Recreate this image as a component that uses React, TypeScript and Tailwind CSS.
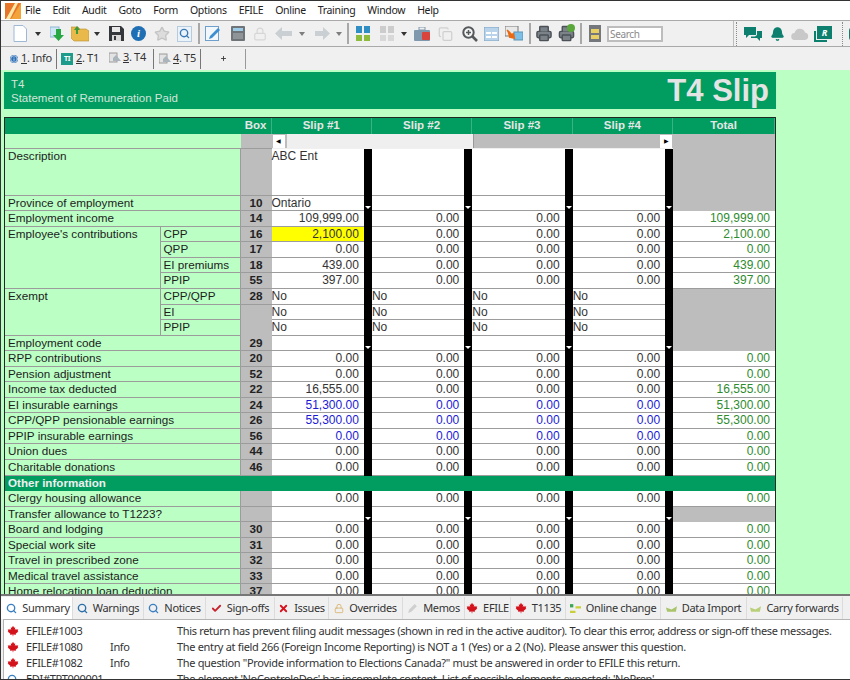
import React from 'react';
import { Bell, Copy, Info, Lock, Printer, Search, Star, X, Check, Plus } from 'lucide-react';

const uiFont = "font-['Noto_Sans',sans-serif] tracking-[-0.33px]";
const gridFont = "font-['Liberation_Sans',Arial,sans-serif]";

const Leaf = ({ className }: { className: string }) => (
  <svg viewBox="0 0 16 16" className={className}>
    <path
      fill="#d3121c"
      d="M8 1 L9.5 3.8 L11 3 L10.4 6.6 L12.2 4.9 L12.7 6.2 L15 5.8 L14.2 8.2 L15.2 8.8 L11.6 11.8 L12 13 L8.4 12.5 L8.4 15 L7.6 15 L7.6 12.5 L4 13 L4.4 11.8 L0.8 8.8 L1.8 8.2 L1 5.8 L3.3 6.2 L3.8 4.9 L5.6 6.6 L5 3 L6.5 3.8 Z"
    />
  </svg>
);

const Caret = ({ className }: { className: string }) => (
  <svg viewBox="0 0 6 4" className={`w-[6px] h-[4px] shrink-0 ${className}`}>
    <path d="M0 0h6L3 4z" fill="#333" />
  </svg>
);

const Sep = ({ className }: { className: string }) => (
  <div className={`w-[2px] h-[21px] shrink-0 bg-[#a8a8a8] ${className}`} />
);

const Dots = ({ className }: { className: string }) => (
  <div className={`w-[1px] h-[24px] shrink-0 border-l border-dotted border-[#8a8a8a] ${className}`} />
);

function Toolbar() {
  return (
    <div className="h-[27px] flex items-center bg-[#f0f0f0] border-y border-[#a9a9a9] overflow-hidden">
      <svg viewBox="0 0 14 17" className="ml-[12px] w-[14px] h-[17px] shrink-0">
        <path d="M1 .5h9l3.5 3.5v12.5H1z" fill="#fff" stroke="#9db9d6" />
      </svg>
      <Caret className="ml-[8px]" />
      <svg viewBox="0 0 14 15" className="ml-[9px] w-[14px] h-[15px] shrink-0">
        <rect x="0" y="1" width="9" height="10" fill="#cfe6f5" stroke="#8db5d3" />
        <path d="M6 3h5v6h3l-5.5 6L3 9h3z" fill="#28a745" />
      </svg>
      <svg viewBox="0 0 18 17" className="ml-[7px] w-[18px] h-[17px] shrink-0">
        <path d="M0 2h7l2 2h6l3 2v10H3L0 13z" fill="#e9b94a" stroke="#b98d2c" strokeWidth=".6" />
        <path d="M6 1l3 4H7v4H5V5H3z" fill="#3c9a3c" />
      </svg>
      <Caret className="ml-[5px]" />
      <svg viewBox="0 0 15 15" className="ml-[9px] w-[15px] h-[15px] shrink-0">
        <path d="M0 0h12l3 3v12H0z" fill="#33373b" />
        <rect x="3" y="1" width="8" height="5" fill="#e8e8e8" />
        <rect x="3" y="9" width="9" height="6" fill="#d8d8d8" />
        <rect x="5" y="10" width="2" height="4" fill="#33373b" />
      </svg>
      <div className="ml-[7px] w-[15px] h-[15px] shrink-0 rounded-full bg-[#1f6fb5] flex items-center justify-center">
        <span className="text-white text-[11px] leading-none font-bold italic font-['Liberation_Serif',serif]">i</span>
      </div>
      <Star className="ml-[8px] w-[16px] h-[16px] shrink-0 text-[#c4c4c4]" fill="#dcdcdc" />
      <div className="ml-[7px] w-[15px] h-[16px] shrink-0 bg-[#eaf2fa] border border-[#b7cbdf] flex items-center justify-center">
        <Search className="w-[11px] h-[11px] text-[#3a78b5]" strokeWidth={3} />
      </div>
      <Sep className="ml-[6px]" />
      <svg viewBox="0 0 15 15" className="ml-[5px] w-[15px] h-[15px] shrink-0">
        <rect x=".5" y=".5" width="13" height="14" fill="#f2f7fc" stroke="#6fa0cc" />
        <path d="M5 10l8-8 2 2-8 8-3 1z" fill="#3d8fd1" />
      </svg>
      <svg viewBox="0 0 14 15" className="ml-[11px] w-[14px] h-[15px] shrink-0">
        <rect width="14" height="15" rx="1" fill="#6f7479" />
        <rect x="2" y="2" width="10" height="3" fill="#9ccbe8" />
        <rect x="2" y="7" width="10" height="6" fill="#8f9499" />
      </svg>
      <Lock className="ml-[8px] w-[14px] h-[16px] shrink-0 text-[#d6d6d6]" />
      <svg viewBox="0 0 17 13" className="ml-[8px] w-[17px] h-[13px] shrink-0">
        <path d="M0 6.5L7 0v4h10v5H7v4z" fill="#c9cfd2" />
      </svg>
      <Caret className="ml-[7px] opacity-60" />
      <svg viewBox="0 0 15 13" className="ml-[10px] w-[15px] h-[13px] shrink-0">
        <path d="M15 6.5L8 0v4H0v5h8v4z" fill="#c9cfd2" />
      </svg>
      <Caret className="ml-[6px] opacity-60" />
      <Sep className="ml-[5px]" />
      <div className="ml-[7px] w-[14px] h-[15px] shrink-0 grid grid-cols-2 gap-[2px]">
        <div className="bg-[#2f8fc4]" />
        <div className="bg-[#2f8fc4]" />
        <div className="bg-[#8dbb3c]" />
        <div className="bg-[#8dbb3c]" />
      </div>
      <div className="ml-[10px] w-[14px] h-[15px] shrink-0 grid grid-cols-2 gap-[2px] opacity-70">
        <div className="bg-[#bdbdbd]" />
        <div className="bg-[#bdbdbd]" />
        <div className="bg-[#cfcfcf]" />
        <div className="bg-[#cfcfcf]" />
      </div>
      <Caret className="ml-[7px]" />
      <svg viewBox="0 0 16 14" className="ml-[7px] w-[16px] h-[14px] shrink-0">
        <rect y="3" width="16" height="11" rx="1" fill="#7f98ad" />
        <rect x="8" y="5" width="8" height="8" rx="1" fill="#d9453d" />
        <rect x="5" y="0" width="6" height="3" fill="none" stroke="#7f98ad" />
      </svg>
      <Copy className="ml-[8px] w-[15px] h-[16px] shrink-0 text-[#cfcfcf]" />
      <svg viewBox="0 0 16 16" className="ml-[9px] w-[16px] h-[16px] shrink-0">
        <circle cx="6.5" cy="6.5" r="5.2" fill="#f5f5f5" stroke="#55595c" strokeWidth="2" />
        <path d="M10.5 10.5L15 15" stroke="#55595c" strokeWidth="2.6" />
        <path d="M6.5 4v5M4 6.5h5" stroke="#55595c" strokeWidth="1.5" />
      </svg>
      <svg viewBox="0 0 15 14" className="ml-[6px] w-[15px] h-[14px] shrink-0">
        <rect width="15" height="14" fill="#b9d3ea" stroke="#7da2c4" />
        <path d="M2 5h5v2H2zM8 5h5v2H8zM2 9h5v2H2zM8 9h5v2H8z" fill="#fff" />
      </svg>
      <svg viewBox="0 0 18 16" className="ml-[6px] w-[18px] h-[16px] shrink-0">
        <rect x="0" y="0" width="13" height="10" fill="#e9e9e9" stroke="#777" />
        <rect x="9" y="6" width="9" height="8" fill="#7cc0e8" stroke="#5d93b5" />
        <path d="M2 4l7 7-1-4 1 5-5-1" fill="#ea6a12" stroke="#ea6a12" strokeWidth="1.6" />
      </svg>
      <Sep className="ml-[6px]" />
      <Printer className="ml-[4px] w-[18px] h-[17px] shrink-0 text-[#4b5157]" fill="#7b8288" />
      <div className="ml-[5px] relative w-[17px] h-[17px] shrink-0">
        <Printer className="w-[17px] h-[17px] text-[#4b5157]" fill="#7b8288" />
        <span className="absolute -top-[1px] right-0 w-[8px] h-[8px] rounded-full bg-[#5aa83a]" />
      </div>
      <Sep className="ml-[5px]" />
      <div className="ml-[7px] w-[12px] h-[17px] shrink-0 bg-[#74787c] flex flex-col items-center justify-center gap-[2px]">
        <div className="w-[8px] h-[4px] bg-[#e8cf63]" />
        <div className="w-[8px] h-[4px] bg-[#e8cf63]" />
      </div>
      <div className={`ml-[6px] w-[56px] h-[16px] shrink-0 bg-white border-2 border-[#bdbdbd] text-[10px] leading-[12px] px-[1px] text-[#8a8a8a] ${uiFont}`}>
        Search
      </div>
      <div className="ml-[70px] w-[1px] h-[26px] shrink-0 bg-[#bdbdbd]" />
      <Dots className="ml-[2px]" />
      <svg viewBox="0 0 18 14" className="ml-[7px] w-[18px] h-[14px] shrink-0">
        <path d="M0 0h12v8H5l-3 3V8H0z" fill="#0c7f6e" />
        <path d="M7 9.5h4l2-1.5V4h5v7h-2v3l-3-3H7z" fill="#0c7f6e" />
      </svg>
      <Bell className="ml-[8px] w-[15px] h-[16px] shrink-0 text-[#0c7f6e]" fill="#0c7f6e" />
      <svg viewBox="0 0 18 14" className="ml-[6px] w-[18px] h-[14px] shrink-0">
        <path d="M4 13a3.5 3.5 0 0 1-.5-7A5.5 5.5 0 0 1 14 5.5a3.8 3.8 0 0 1 0 7.5z" fill="#c8c8c8" />
      </svg>
      <div className="ml-[5px] relative w-[18px] h-[16px] shrink-0">
        <div className="absolute left-0 bottom-0 w-[13px] h-[11px] border-l-2 border-b-2 border-[#0c7f6e]" />
        <div className="absolute right-0 top-0 w-[15px] h-[13px] bg-[#0c7f6e] flex items-center justify-center text-white text-[9px] font-bold italic leading-none">
          R
        </div>
      </div>
      <Dots className="ml-[10px]" />
      <div className="ml-[6px] w-[6px] h-[14px] shrink-0 rounded-l-sm bg-[#0c7f6e]" />
    </div>
  );
}

const DocGlyph = () => (
  <svg viewBox="0 0 12 11" className="w-[12px] h-[11px] shrink-0">
    <rect x="0" y="1" width="8" height="9" fill="#e3e3e3" stroke="#9a9a9a" />
    <path d="M4 6l3-3 5 6H4z" fill="#a9b4bb" />
  </svg>
);

function SlipTabBar() {
  return (
    <div className={`h-[23px] flex items-center bg-[#f0f0f0] text-[11px] text-[#333] ${uiFont}`}>
      <div className="w-[55px] pl-[9px] flex items-center gap-[3px] shrink-0">
        <Info className="w-[8px] h-[8px] text-white bg-[#2f6fb5] rounded-full" />
        <span>
          <u>1</u>. Info
        </span>
      </div>
      <div className="w-[1px] h-[20px] bg-[#777] shrink-0" />
      <div className="w-[52px] pl-[4px] flex items-center gap-[3px] shrink-0">
        <span className="w-[12px] h-[12px] bg-[#1d9c8c] text-white text-[7px] font-bold leading-[12px] text-center">TI</span>
        <span>
          <u>2</u>. T1
        </span>
      </div>
      <div className="w-[44px] flex items-center gap-[2px] shrink-0 -mt-[3px]">
        <DocGlyph />
        <span>
          <u>3</u>. T4
        </span>
      </div>
      <div className="w-[1px] h-[20px] bg-[#777] shrink-0" />
      <div className="w-[46px] pl-[5px] flex items-center gap-[2px] shrink-0">
        <DocGlyph />
        <span>
          <u>4</u>. T5
        </span>
      </div>
      <div className="w-[1px] h-[20px] bg-[#777] shrink-0" />
      <div className="w-[44px] flex justify-center items-center shrink-0">
        <Plus className="w-[7px] h-[7px] text-[#333]" strokeWidth={3} />
      </div>
      <div className="w-[1px] h-[20px] bg-[#999] shrink-0" />
    </div>
  );
}

const lineB = 'border-b border-[#9c9c9c]';
const labelCell = `bg-[#bbffc4] border-r border-[#9c9c9c] ${lineB} pl-[3px] text-[#1c1c1c] text-[11.7px] whitespace-nowrap leading-[14px]`;
const boxCell = `bg-[#bdbdbd] ${lineB} text-center font-bold text-[#222] text-[11.7px] leading-[14px]`;
const greyCell = 'bg-[#bdbdbd]';
const totalCell = `bg-white ${lineB} text-right pr-[5px] leading-[14px] text-[#2e8b2e]`;

function SlipCell({
  value,
  color = 'text-[#333]',
  left = false,
  dropdown = false,
  bg = 'bg-white',
}: {
  value: string;
  color?: string;
  left?: boolean;
  dropdown?: boolean;
  bg?: string;
}) {
  return (
    <div className="flex min-w-0">
      <div className={`flex-1 min-w-0 ${bg} ${lineB} leading-[14px] whitespace-nowrap ${color} ${left ? 'text-left' : 'text-right pr-[5px]'}`}>
        {value}
      </div>
      <div className="w-[8px] shrink-0 bg-black flex items-end justify-center pb-[2px]">
        {dropdown && (
          <svg viewBox="0 0 6 3" className="w-[6px] h-[3px]">
            <path d="M0 0h6L3 3z" fill="#fff" />
          </svg>
        )}
      </div>
    </div>
  );
}

function NumCells({ first, color }: { first: string; color?: string }) {
  const zero = '0.00';
  return (
    <>
      <SlipCell value={first} color={color} />
      <SlipCell value={zero} color={color} />
      <SlipCell value={zero} color={color} />
      <SlipCell value={zero} color={color} />
      <div className={totalCell}>{first}</div>
    </>
  );
}

const DropCells = ({ first = '' }: { first?: string }) => (
  <>
    <SlipCell value={first} left dropdown />
    <SlipCell value="" left dropdown />
    <SlipCell value="" left dropdown />
    <SlipCell value="" left dropdown />
  </>
);

const simpleRows = [
  { label: 'RPP contributions', box: '20', first: '0.00' },
  { label: 'Pension adjustment', box: '52', first: '0.00' },
  { label: 'Income tax deducted', box: '22', first: '16,555.00' },
  { label: 'EI insurable earnings', box: '24', first: '51,300.00', blue: true },
  { label: 'CPP/QPP pensionable earnings', box: '26', first: '55,300.00', blue: true },
  { label: 'PPIP insurable earnings', box: '56', first: '0.00', blue: true },
  { label: 'Union dues', box: '44', first: '0.00' },
  { label: 'Charitable donations', box: '46', first: '0.00' },
];

const lowerRows = [
  { label: 'Board and lodging', box: '30' },
  { label: 'Special work site', box: '31' },
  { label: 'Travel in prescribed zone', box: '32' },
  { label: 'Medical travel assistance', box: '33' },
  { label: 'Home relocation loan deduction', box: '37' },
];

const contributions = [
  { label: 'CPP', box: '16', first: '2,100.00' },
  { label: 'QPP', box: '17', first: '0.00' },
  { label: 'EI premiums', box: '18', first: '439.00' },
  { label: 'PPIP', box: '55', first: '397.00' },
];

function SlipGrid() {
  return (
    <div className={`ml-[3px] w-[772px] mt-[8px] border-[1.5px] border-[#1d2b22] text-[12px] text-[#333] grid grid-cols-[155.5px_80px_31px_100.4px_100.4px_100.4px_100.4px_1fr] auto-rows-[15.55px] ${gridFont}`}>
      {/* heading */}
      <div className="col-span-2 bg-[#009c60]" />
      <div className="bg-[#009c60] text-[#e6e6e6] text-[11.5px] font-bold text-center leading-[15px] border-r border-[#3bb283]">Box</div>
      {['Slip #1', 'Slip #2', 'Slip #3', 'Slip #4', 'Total'].map((h) => (
        <div key={h} className="bg-[#009c60] text-[#e6e6e6] text-[11.5px] font-bold text-center leading-[15px] border-r border-[#3bb283] last:border-r-0">
          {h}
        </div>
      ))}

      {/* scrollbar */}
      <div className={`col-span-2 bg-[#bbffc4] ${lineB}`} />
      <div className={boxCell} />
      <div className="col-span-4 bg-[#bdbdbd] border-b border-[#f0f0f0] flex">
        <div className="ml-[1px] w-[12px] h-[13px] mt-[1px] bg-white flex items-center justify-center text-[6px] leading-none text-black">◀</div>
        <div className="ml-[2px] w-[187px] h-[14px] bg-[#efefef] border-r border-[#999]" />
        <div className="ml-auto mr-[1px] w-[12px] h-[13px] mt-[1px] bg-white flex items-center justify-center text-[6px] leading-none text-black">▶</div>
      </div>
      <div className={greyCell} />

      {/* description and province */}
      <div className={`col-span-2 row-span-3 ${labelCell}`}>Description</div>
      <div className={`row-span-3 ${boxCell}`} />
      <div className="row-span-3 flex min-w-0">
        <div className={`flex-1 bg-white ${lineB} leading-[14px]`}>ABC Ent</div>
        <div className="w-[8px] bg-black" />
      </div>
      {[2, 3, 4].map((n) => (
        <div key={n} className="row-span-3 flex min-w-0">
          <div className={`flex-1 bg-white ${lineB}`} />
          <div className="w-[8px] bg-black" />
        </div>
      ))}
      <div className={`row-span-4 ${greyCell}`} />

      <div className={`col-span-2 ${labelCell}`}>Province of employment</div>
      <div className={boxCell}>10</div>
      <DropCells first="Ontario" />

      <div className={`col-span-2 ${labelCell}`}>Employment income</div>
      <div className={boxCell}>14</div>
      <NumCells first="109,999.00" />

      {/* contributions */}
      <div className={`row-span-4 ${labelCell}`}>Employee's contributions</div>
      {contributions.map((c) => (
        <React.Fragment key={c.box}>
          <div className={labelCell}>{c.label}</div>
          <div className={boxCell}>{c.box}</div>
          {c.box === '16' ? (
            <>
              <SlipCell value={c.first} bg="bg-[#ffff00]" />
              <SlipCell value="0.00" />
              <SlipCell value="0.00" />
              <SlipCell value="0.00" />
              <div className={totalCell}>{c.first}</div>
            </>
          ) : (
            <NumCells first={c.first} />
          )}
        </React.Fragment>
      ))}

      {/* exempt */}
      <div className={`row-span-3 ${labelCell}`}>Exempt</div>
      {['CPP/QPP', 'EI', 'PPIP'].map((l, i) => (
        <React.Fragment key={l}>
          <div className={labelCell}>{l}</div>
          <div className={i === 0 ? boxCell : `${boxCell} border-[#bdbdbd]`}>{i === 0 ? '28' : ''}</div>
          <SlipCell value="No" left />
          <SlipCell value="No" left />
          <SlipCell value="No" left />
          <SlipCell value="No" left />
          {i === 0 && <div className={`row-span-4 ${greyCell}`} />}
        </React.Fragment>
      ))}

      <div className={`col-span-2 ${labelCell}`}>Employment code</div>
      <div className={boxCell}>29</div>
      <DropCells />

      {simpleRows.map((r) => (
        <React.Fragment key={r.box}>
          <div className={`col-span-2 ${labelCell}`}>{r.label}</div>
          <div className={boxCell}>{r.box}</div>
          <NumCells first={r.first} color={r.blue ? 'text-[#1a1ad6]' : undefined} />
        </React.Fragment>
      ))}

      {/* other information */}
      <div className="col-span-8 bg-[#009c60] text-[#f0f0f0] text-[11.6px] font-bold pl-[3px] leading-[14px]">Other information</div>

      <div className={`col-span-2 ${labelCell}`}>Clergy housing allowance</div>
      <div className={boxCell} />
      <NumCells first="0.00" />

      <div className={`col-span-2 ${labelCell}`}>Transfer allowance to T1223?</div>
      <div className={boxCell} />
      <DropCells />
      <div className={greyCell} />

      {lowerRows.map((r) => (
        <React.Fragment key={r.box}>
          <div className={`col-span-2 ${labelCell}`}>{r.label}</div>
          <div className={boxCell}>{r.box}</div>
          <NumCells first="0.00" />
        </React.Fragment>
      ))}
    </div>
  );
}

const MagGlyph = ({ color }: { color: string }) => (
  <Search className={`w-[11px] h-[11px] shrink-0 ${color}`} strokeWidth={3} />
);

const auditTabs: { label: string; w: string; icon: React.ReactNode; active?: boolean }[] = [
  { label: 'Summary', w: 'w-[72px] pl-[3px]', icon: <MagGlyph color="text-[#3a7fc0]" />, active: true },
  { label: 'Warnings', w: 'w-[71px]', icon: <MagGlyph color="text-[#2a6fa8]" /> },
  { label: 'Notices', w: 'w-[62px]', icon: <MagGlyph color="text-[#3a7fc0]" /> },
  { label: 'Sign-offs', w: 'w-[69px]', icon: <Check className="w-[11px] h-[11px] shrink-0 text-[#c8232c]" strokeWidth={4} /> },
  { label: 'Issues', w: 'w-[54px]', icon: <X className="w-[11px] h-[11px] shrink-0 text-[#d9121f]" strokeWidth={4} /> },
  { label: 'Overrides', w: 'w-[74px]', icon: <Lock className="w-[10px] h-[11px] shrink-0 text-[#d9b26a]" /> },
  { label: 'Memos', w: 'w-[62px]', icon: <svg viewBox="0 0 10 10" className="w-[11px] h-[11px] shrink-0"><path d="M1 9l1-3 5-5 2 2-5 5z" fill="#cfcfcf" /></svg> },
  { label: 'EFILE', w: 'w-[46px]', icon: <Leaf className="w-[12px] h-[12px] shrink-0" /> },
  { label: 'T1135', w: 'w-[55px]', icon: <Leaf className="w-[12px] h-[12px] shrink-0" /> },
  { label: 'Online change', w: 'w-[95px]', icon: <svg viewBox="0 0 10 10" className="w-[11px] h-[11px] shrink-0"><path d="M0 1h3v3H0z" fill="#3aa655" /><path d="M5 3h5v2H5zM0 7h5v2H0z" fill="#c9cf3a" /></svg> },
  { label: 'Data Import', w: 'w-[86px]', icon: <svg viewBox="0 0 10 10" className="w-[11px] h-[11px] shrink-0"><path d="M0 4l5 2 5-3-1 5H1z" fill="#a9c46a" /></svg> },
  { label: 'Carry forwards', w: 'w-[96px]', icon: <svg viewBox="0 0 10 10" className="w-[11px] h-[11px] shrink-0"><path d="M0 4l5 2 5-3-1 5H1z" fill="#b9cf7a" /></svg> },
];

const messages = [
  {
    id: 'EFILE#1003',
    kind: '',
    text: 'This return has prevent filing audit messages (shown in red in the active auditor). To clear this error, address or sign-off these messages.',
  },
  {
    id: 'EFILE#1080',
    kind: 'Info',
    text: 'The entry at field 266 (Foreign Income Reporting) is NOT a 1 (Yes) or a 2 (No). Please answer this question.',
  },
  {
    id: 'EFILE#1082',
    kind: 'Info',
    text: 'The question "Provide information to Elections Canada?" must be answered in order to EFILE this return.',
  },
  {
    id: 'EDI#TPT000001',
    kind: '',
    text: "The element 'NoControleDoc' has incomplete content. List of possible elements expected: 'NoPrep'.",
  },
];

function AuditPane() {
  return (
    <div className={`h-[85px] shrink-0 bg-[#f0f0f0] border-t-[2px] border-[#777] flex flex-col text-[11px] text-[#333] overflow-hidden ${uiFont}`}>
      <div className="h-[22px] mt-[1px] flex items-stretch shrink-0">
        {auditTabs.map((t) => (
          <div
            key={t.label}
            className={`${t.w} shrink-0 flex items-center justify-center gap-[5px] border-r border-[#dcdcdc] ${t.active ? 'bg-white' : ''}`}
          >
            {t.icon}
            <span className="whitespace-nowrap">{t.label}</span>
          </div>
        ))}
      </div>
      <div className="flex-1 bg-white ml-[2px] border-l border-t border-[#b5b5b5] pt-[3px] overflow-hidden">
        {messages.map((m, i) => (
          <div key={m.id} className="h-[16px] flex items-center whitespace-nowrap leading-[16px]">
            <div className="w-[22px] pl-[3px] shrink-0">
              {i < 3 ? <Leaf className="w-[12px] h-[12px]" /> : <Search className="w-[11px] h-[11px] text-[#3a7fc0]" strokeWidth={3} />}
            </div>
            <span className="w-[84px] shrink-0">{m.id}</span>
            <span className="w-[67px] shrink-0">{m.kind}</span>
            <span>{m.text}</span>
          </div>
        ))}
      </div>
    </div>
  );
}

export default function App() {
  return (
    <div className="w-[850px] h-[680px] flex flex-col overflow-hidden bg-white border-t border-b border-l border-[#333]">
      <div className={`h-[19px] shrink-0 flex items-center bg-white text-[10.5px] text-[#222] ${uiFont}`}>
        <svg viewBox="0 0 16 16" className="ml-[4px] w-[16px] h-[16px] shrink-0">
          <rect width="16" height="16" fill="#f2a33a" />
          <path d="M16 0L6 16H0V0z" fill="#e8762a" />
          <path d="M13 0L5 16H1L10 0z" fill="#fbe9a8" />
        </svg>
        <div className="ml-[4px] flex gap-[12px]">
          {['File', 'Edit', 'Audit', 'Goto', 'Form', 'Options', 'EFILE', 'Online', 'Training', 'Window', 'Help'].map((m) => (
            <span key={m}>{m}</span>
          ))}
        </div>
      </div>
      <Toolbar />
      <SlipTabBar />

      {/* form area */}
      <div className="flex-1 min-h-0 overflow-hidden bg-[#bbffc4] pt-[2px]">
        <div className="ml-[3px] w-[772px] h-[37px] bg-[#009c60] flex justify-between pl-[7px] pr-[7px] overflow-hidden">
          <div className={`text-[11.5px] leading-[14px] pt-[5px] text-[#d4e6dc] ${gridFont}`}>
            <div>T4</div>
            <div>Statement of Remuneration Paid</div>
          </div>
          <div className={`text-[31px] leading-[37px] font-bold text-[#e4e4e4] ${gridFont}`}>T4 Slip</div>
        </div>
        <SlipGrid />
      </div>

      <AuditPane />
    </div>
  );
}
